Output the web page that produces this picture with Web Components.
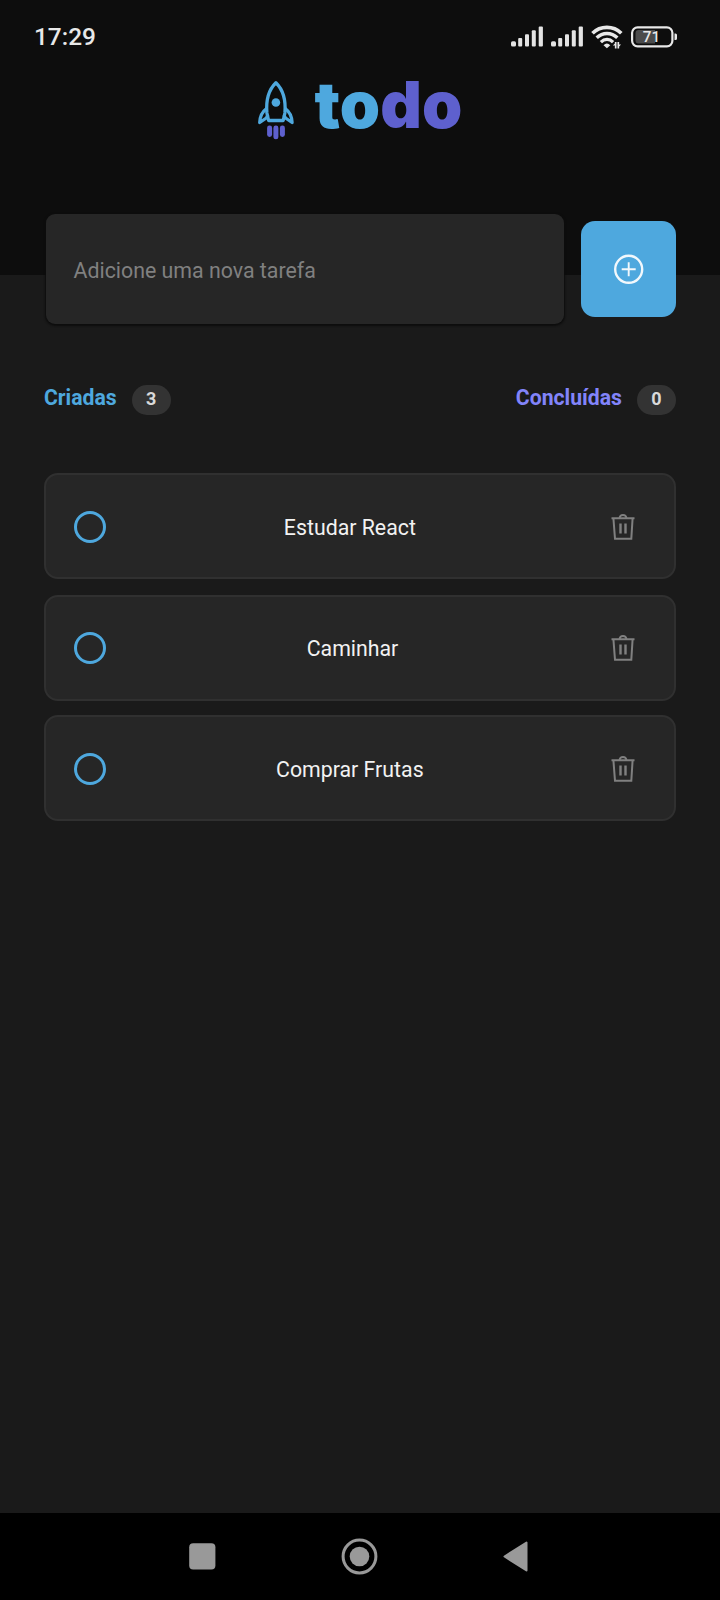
<!DOCTYPE html>
<html lang="pt-BR">
<head>
<meta charset="utf-8">
<title>todo</title>
<style>
html,body{margin:0;background:#1a1a1a}
body{font-family:Roboto,"Liberation Sans",sans-serif;color:#f2f2f2}
</style>
</head>
<body>
<todo-app></todo-app>
<script>
const define = (name, html) => {
  const t = document.createElement('template');
  t.innerHTML = html;
  customElements.define(name, class extends HTMLElement {
    constructor() {
      super();
      this.attachShadow({ mode: 'open' }).append(t.content.cloneNode(true));
    }
  });
};

define('signal-bars', `<style>:host{display:block;height:21px}svg{display:block}</style>
<svg width="33" height="21" viewBox="0 0 33 21" fill="#e4e4e4"><rect x="0" y="15.3" width="5" height="5.2" rx="1.6"/><rect x="7.2" y="12" width="4" height="8.5" rx="1"/><rect x="14" y="8.3" width="4" height="12.2" rx="1"/><rect x="20.8" y="4.3" width="4" height="16.2" rx="1"/><rect x="27.7" y="0.4" width="4.2" height="20.1" rx="1"/></svg>`);

define('status-bar', `<style>
:host{display:flex;align-items:center;height:72px;box-sizing:border-box;padding:1px 42px 0 34px}
.time{font-size:24.4px;line-height:28px;font-weight:500;color:#e8e8e8;flex:1}
.icons{display:flex;align-items:center}
signal-bars{margin-right:7px}
svg{display:block}
.bat{display:grid}
.bat>*{grid-area:1/1}
.bat span{font-size:15.200px;line-height:22px;font-weight:500;width:41px;text-align:center;color:#e8e8e8}
</style>
<span class="time">17:29</span>
<div class="icons"><signal-bars></signal-bars><signal-bars></signal-bars>
<svg width="40" height="24" viewBox="0 0 40 24" fill="none" stroke="#e8e8e8" stroke-linecap="butt"><path d="M1.500 8.200C9.500 .3 22.300 .3 30.300 8.200" stroke-width="3.700"/><path d="M5.700 12.800C11.500 7 20.500 7 26.300 12.800" stroke-width="3.400"/><path d="M9.900 17.200C13.500 13.500 18.500 13.500 22.100 17.200" stroke-width="3.200"/><path d="M12.500 20.200Q15.900 17 19.300 20.200L15.900 23.300Z" fill="#e8e8e8" stroke="none"/><path d="M24.700 17v6.500M27.300 17v6.500" stroke-width="1.700"/><path d="M21.800 20.500l3-2.800v2.800zM27.300 19.500h2.800l-2.800 2.700z" fill="#e8e8e8" stroke="none"/></svg>
<div class="bat"><svg width="47" height="22" viewBox="0 0 47 22"><rect x="1.100" y="1.300" width="40.300" height="19" rx="5.500" fill="none" stroke="#e8e8e8" stroke-width="2.200"/><path d="M7.500 4H24v13.500H7.500a3 3 0 0 1-3-3V7a3 3 0 0 1 3-3z" fill="#4b4b4b"/><path d="M43.500 7.500h1a1.500 1.500 0 0 1 1.500 1.500v3.500a1.500 1.500 0 0 1-1.500 1.500h-1z" fill="#e8e8e8"/></svg><span>71</span></div></div>`);

define('todo-logo', `<style>
:host{display:flex;justify-content:center;height:64px}
svg{display:block;margin:8px 19px 0 0}
.word{font:900 64.500px/67px Inter,sans-serif;letter-spacing:.2px;color:#4ea8de;white-space:nowrap}
.word b{font-weight:900;color:#5e60ce}
</style>
<svg width="38" height="60" viewBox="0 0 38 60"><g fill="none" stroke="#4ea8de" stroke-width="3.300" stroke-linejoin="round"><path d="M11.600 40.500L9.900 33C8.800 20 12 9.500 18.900 2.800C25.800 9.500 29 20 27.900 33L26.200 40.500Z"/><path d="M9.600 28.500C5.500 31.500 3 35.500 2.700 42.500L9.300 38L11 35M28.200 28.500C32.300 31.500 34.800 35.500 35.100 42.500L28.500 38L26.800 35"/></g><circle cx="18.900" cy="22.500" r="4.300" fill="#4ea8de"/><g fill="#5e60ce"><rect x="10.100" y="45.500" width="5" height="11.500" rx="2.400"/><rect x="16.400" y="45.500" width="5" height="13.800" rx="2.400"/><rect x="22.900" y="45.500" width="5" height="11.500" rx="2.400"/></g></svg>
<div class="word">to<b>do</b></div>`);

define('app-header', `<style>:host{display:block;height:275px;background:#0d0d0d}</style><status-bar></status-bar><todo-logo></todo-logo>`);

define('task-form', `<style>
:host{display:flex;align-items:center;gap:17px;margin-top:-61px;padding-left:2px}
.field{box-sizing:border-box;width:518px;height:110px;border-radius:9px;background:#262626;box-shadow:0 1px 2px 1px #0d0d0d;padding:2px 27.500px 0;display:flex;align-items:center;font-size:21.350px;color:#808080}
button{all:unset;width:95px;height:96px;border-radius:14px;background:#4ea8de;display:grid;place-items:center}
svg{display:block}
</style>
<div class="field"><slot></slot></div>
<button aria-label="Adicionar"><svg width="30" height="30" viewBox="0 0 30 30" fill="none" stroke="#f2f8fc"><circle cx="14.700" cy="15.300" r="13.500" stroke-width="2.400"/><path d="M14.700 8.300v14M7.700 15.300h14" stroke-width="1.900"/></svg></button>`);

define('task-counter', `<style>
:host{display:flex;gap:15px;font-size:21.200px;line-height:28px;font-weight:700}
.n{box-sizing:border-box;width:39px;height:30px;margin-top:1px;border-radius:15px;background:#333;color:#d9d9d9;font-size:18px;line-height:28px;text-align:center}
</style><span><slot></slot></span><span class="n"><slot name="n"></slot></span>`);

define('task-card', `<style>
:host{display:flex;align-items:center;box-sizing:border-box;height:106px;border:2px solid #303030;border-radius:14px;background:#262626;padding:var(--card-shift,1px) 39px 0 28px}
.check{box-sizing:border-box;width:32px;height:32px;border:3px solid #4ea8de;border-radius:50%}
.text{flex:1;text-align:center;font-size:21.300px;line-height:26px;color:#f2f2f2;padding:2px 12px 0 0;white-space:pre}
svg{display:block}
</style>
<div class="check"></div><div class="text"><slot></slot></div>
<svg width="24" height="28" viewBox="0 0 24 28" fill="none" stroke="#808080" stroke-width="2"><path d="M.500 5.200H23.500M2.400 5.200L4 25.800H20.300L21.600 5.200"/><path d="M8.500 5Q9 2 12 2T15.500 5" stroke-width="1.900"/><path d="M9.500 10.500v10M14.500 10.500v10" stroke-width="2.400"/></svg>`);

define('nav-bar', `<style>:host{display:flex;align-items:center;height:87px;box-sizing:border-box;background:#000;padding-left:189px}svg{display:block}.c{margin:0 125px 0 125px}</style>
<svg width="27" height="27"><rect x=".200" y=".200" width="26.200" height="26.400" rx="4" fill="#999"/></svg>
<svg class="c" width="37" height="37"><circle cx="18.500" cy="18.500" r="16.400" fill="none" stroke="#999" stroke-width="3"/><circle cx="18.500" cy="18.500" r="9.800" fill="#999"/></svg>
<svg width="25" height="31"><path d="M1.500 15.500L23.500 1.500V29.500Z" fill="#999" stroke="#999" stroke-width="2" stroke-linejoin="round"/></svg>`);

define('todo-app', `<style>
:host{display:flex;flex-direction:column;height:1600px;background:#1a1a1a}
main{flex:1;padding:0 44px}
.counts{display:flex;justify-content:space-between;margin-top:60px}
.made{color:#4ea8de}.done{color:#8284fa}
.list{display:grid;gap:15px;margin-top:58px}
.list task-card:nth-child(2){margin:1px 0 -1px;--card-shift:0px}
</style>
<app-header></app-header>
<main><task-form>Adicione uma nova tarefa</task-form>
<div class="counts"><task-counter class="made">Criadas<span slot="n">3</span></task-counter><task-counter class="done">Concluídas<span slot="n">0</span></task-counter></div>
<div class="list"><task-card>Estudar React </task-card><task-card>Caminhar</task-card><task-card>Comprar Frutas </task-card></div>
</main><nav-bar></nav-bar>`);
</script>
</body>
</html>
